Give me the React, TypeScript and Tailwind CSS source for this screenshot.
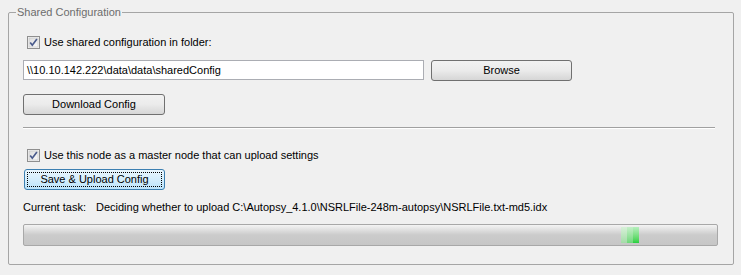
import React from "react";

function CheckBox() {
    return (
        <svg width="13" height="13" viewBox="0 0 13 13" className="shrink-0">
            <defs>
                <linearGradient id="cbg" x1="0" y1="0" x2="1" y2="1">
                    <stop offset="0" stopColor="#dcdcdc" />
                    <stop offset="1" stopColor="#fbfbfb" />
                </linearGradient>
            </defs>
            <rect x="0.5" y="0.5" width="12" height="12" fill="#f4f4f4" stroke="#8f8f8f" />
            <rect x="2" y="2" width="9" height="9" fill="url(#cbg)" stroke="#c4c4c4" strokeWidth="0.6" />
            <path d="M3.2 6.4 L5.3 9.2 L9.9 3" fill="none" stroke="#4a5b8c" strokeWidth="1.7" />
        </svg>
    );
}

function Button({ label, width, focused }: { label: string; width: string; focused?: boolean }) {
    if (focused) {
        return (
            <button className={`${width} h-[21px] rounded-[3px] border border-[#3c7fb1] bg-gradient-to-b from-[#eaf6fd] to-[#bde4fb] p-[2px] text-[11px] text-black`}>
                <div className="w-full h-full border border-dotted border-black flex items-center justify-center">
                    {label}
                </div>
            </button>
        );
    }
    return (
        <button className={`${width} h-[21px] rounded-[3px] border border-[#707070] bg-gradient-to-b from-[#f2f2f2] via-[#ebebeb] to-[#d6d6d6] text-[11px] text-black flex items-center justify-center`}>
            {label}
        </button>
    );
}

export default function App() {
    return (
        <div className="w-[741px] h-[275px] bg-[#f0f0f0] pt-[5px] pl-[8px] font-['Liberation_Sans',Arial,sans-serif] text-[11px] text-black">
            <fieldset className="w-[726px] h-[260px] border border-[#a5a5a5] rounded-[2px] pl-[14px]">
                <legend className="-ml-[7px] px-[1px] text-[11px] leading-[14px] text-[#6d6d6d]">
                    Shared Configuration
                </legend>

                <div className="flex items-center gap-[4px] mt-[17px] ml-[4px] h-[13px]">
                    <CheckBox />
                    <span>Use shared configuration in folder:</span>
                </div>

                <div className="flex items-start gap-[7px] mt-[11px]">
                    <div className="w-[401px] h-[20px] bg-white border border-[#abadb3] flex items-center pl-[3px]">
                        \\10.10.142.222\data\data\sharedConfig
                    </div>
                    <Button label="Browse" width="w-[141px]" />
                </div>

                <div className="mt-[13px]">
                    <Button label="Download Config" width="w-[142px]" />
                </div>

                <div className="mt-[12px] w-[692px] h-[2px] border-t border-[#a0a0a0] border-b border-b-white" />

                <div className="flex items-center gap-[4px] mt-[20px] ml-[4px] h-[13px]">
                    <CheckBox />
                    <span>Use this node as a master node that can upload settings</span>
                </div>

                <div className="mt-[7px] ml-[1px]">
                    <Button label="Save &amp; Upload Config" width="w-[141px]" focused />
                </div>

                <div className="mt-[10px] h-[14px] flex items-center">
                    <span>Current task:</span>
                    <span className="ml-[10px]">Deciding whether to upload C:\Autopsy_4.1.0\NSRLFile-248m-autopsy\NSRLFile.txt-md5.idx</span>
                </div>

                <div className="mt-[10px] w-[695px] h-[22px] rounded-[2px] border border-[#a8a8a8] bg-gradient-to-b from-[#f4f4f4] via-[#cbcbcb] to-[#c6c6c6] flex items-center">
                    <div className="ml-[597px] h-[16px] flex">
                        <div className="w-[6px] h-full bg-gradient-to-b from-[#d7f0d8] to-[#a3dca7]" />
                        <div className="w-[6px] h-full bg-gradient-to-b from-[#c4efc8] to-[#6ed87a]" />
                        <div className="w-[6px] h-full bg-gradient-to-b from-[#b5efbd] to-[#22d03e]" />
                    </div>
                </div>
            </fieldset>
        </div>
    );
}
